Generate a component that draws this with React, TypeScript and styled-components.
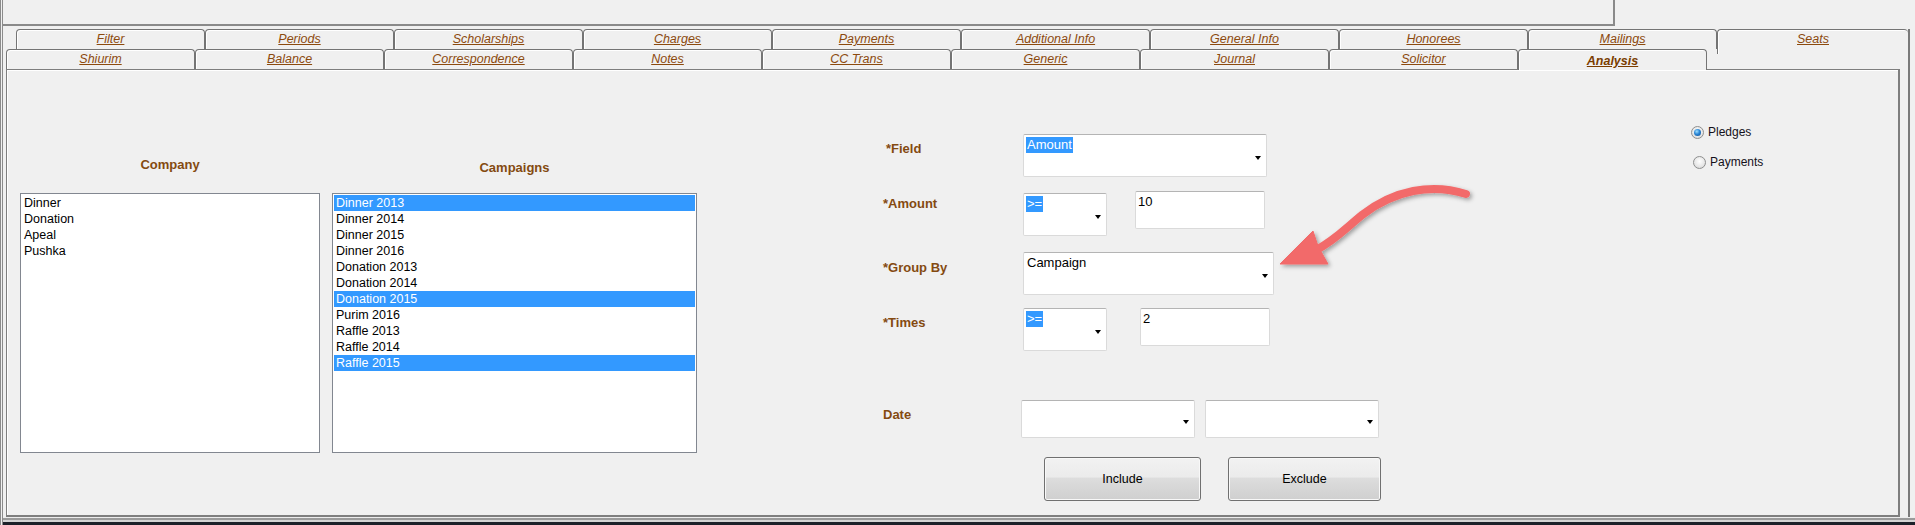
import React from 'react'
import styled, { createGlobalStyle } from 'styled-components'

const GlobalStyle = createGlobalStyle`
  html, body {
    margin: 0;
    padding: 0;
    background: #f0f0f0;
  }
  body {
    font-family: 'Liberation Sans', Arial, sans-serif;
  }
`

const Window = styled.div`
  position: relative;
  width: 1915px;
  height: 525px;
  box-sizing: border-box;
  border-left: 3px double #8b8b8b;
  background: #f0f0f0;
  display: flex;
  flex-direction: column;
  overflow: hidden;
`

const TopPanel = styled.div`
  flex: none;
  box-sizing: border-box;
  width: 1612px;
  height: 26px;
  border-right: 2px solid #8a8a8a;
  border-bottom: 2px solid #8a8a8a;
`

const TabControl = styled.div`
  flex: 1;
  min-height: 0;
  margin: 3px 5px 0 0;
  display: flex;
  flex-direction: column;
  border-right: 2px solid #7a7a7a;
`

interface TabRowProps {
  $indent: number
}
const TabRow = styled.div<TabRowProps>`
  flex: none;
  display: flex;
  height: 20px;
  padding-left: ${({ $indent }) => $indent}px;
`

interface TabProps {
  $active?: boolean
  $wide?: boolean
}
const Tab = styled.div<TabProps>`
  position: relative;
  z-index: ${({ $active }) => ($active ? 2 : 1)};
  box-sizing: border-box;
  flex: ${({ $wide }) => ($wide ? 1 : 'none')};
  width: ${({ $wide }) => ($wide ? 'auto' : '189px')};
  height: ${({ $active, $wide }) => ($active ? 21 : $wide ? 25 : 20)}px;
  padding-top: ${({ $active }) => ($active ? 2 : 0)}px;
  border: 1px solid #747474;
  border-bottom: none;
  border-right-width: ${({ $wide }) => ($wide ? 0 : 1)}px;
  border-radius: 4px 4px 0 0;
  background: #f0f0f0;
  box-shadow: inset 1px 1px 0 #ffffff;
  text-align: center;
  font-size: 12.5px;
  line-height: 18px;
  font-style: italic;
  font-weight: ${({ $active }) => ($active ? 700 : 400)};
  color: ${({ $active }) => ($active ? '#7a3d00' : '#8c4a0e')};
  text-decoration: underline;
  white-space: nowrap;
`

const ContentPanel = styled.div`
  flex: 1;
  min-height: 0;
  margin: 0 8px 0 3px;
  box-sizing: border-box;
  border: 1px solid #7e7e7e;
  border-right-width: 2px;
  border-bottom-width: 2px;
  box-shadow: inset 1px 1px 0 #ffffff;
  display: flex;
  align-items: flex-start;
`

const BottomBar = styled.div`
  flex: none;
  height: 8px;
  background: linear-gradient(
    #ececec 0px,
    #ececec 1px,
    #9a9a9a 1px,
    #9a9a9a 3px,
    #d4d4d4 3px,
    #d4d4d4 5px,
    #1c2129 5px
  );
`

const ListsArea = styled.div`
  display: flex;
  padding-left: 13px;
  gap: 12px;
`

interface ListColumnProps {
  $width: number
}
const ListColumn = styled.div<ListColumnProps>`
  width: ${({ $width }) => $width}px;
  display: flex;
  flex-direction: column;
`

interface ColumnTitleProps {
  $top: number
}
const ColumnTitle = styled.div<ColumnTitleProps>`
  box-sizing: border-box;
  height: 123px;
  padding-top: ${({ $top }) => $top}px;
  text-align: center;
  font-size: 13px;
  line-height: 16px;
  font-weight: 700;
  color: #844a10;
`

const ListBox = styled.div`
  box-sizing: border-box;
  height: 260px;
  padding: 1px;
  background: #ffffff;
  border: 1px solid #828790;
`

interface ListItemProps {
  $selected?: boolean
}
const ListItem = styled.div<ListItemProps>`
  height: 16px;
  padding-left: 2px;
  font-size: 12.5px;
  line-height: 16px;
  color: ${({ $selected }) => ($selected ? '#ffffff' : '#000000')};
  background: ${({ $selected }) => ($selected ? '#3399ff' : 'transparent')};
  white-space: nowrap;
`

const FormArea = styled.div`
  width: 500px;
  margin-left: 186px;
  padding-top: 64px;
  display: flex;
  flex-direction: column;
`

interface FormRowProps {
  $mt?: number
}
const FormRow = styled.div<FormRowProps>`
  display: flex;
  align-items: flex-start;
  margin-top: ${({ $mt }) => $mt || 0}px;
`

interface FieldLabelProps {
  $pt: number
  $pl?: number
  $w?: number
}
const FieldLabel = styled.div<FieldLabelProps>`
  box-sizing: border-box;
  flex: none;
  width: ${({ $w }) => $w || 140}px;
  padding-top: ${({ $pt }) => $pt}px;
  padding-left: ${({ $pl }) => $pl || 0}px;
  font-size: 13px;
  line-height: 16px;
  font-weight: 700;
  color: #844a10;
`

interface ControlsProps {
  $gap?: number
  $ml?: number
}
const Controls = styled.div<ControlsProps>`
  display: flex;
  align-items: flex-start;
  gap: ${({ $gap }) => $gap || 0}px;
  margin-left: ${({ $ml }) => $ml || 0}px;
`

interface BoxProps {
  $w: number
  $h: number
  $mt?: number
}
const SelectBox = styled.div<BoxProps>`
  box-sizing: border-box;
  width: ${({ $w }) => $w}px;
  height: ${({ $h }) => $h}px;
  margin-top: ${({ $mt }) => $mt || 0}px;
  padding: 2px 5px 0 2px;
  display: flex;
  align-items: center;
  background: #ffffff;
  border: 1px solid #dadada;
  border-top-color: #b4b4b4;
  border-radius: 2px;
  font-size: 13px;
  color: #000000;
`

interface SelectValueProps {
  $highlight?: boolean
}
const SelectValue = styled.span<SelectValueProps>`
  align-self: flex-start;
  line-height: 16px;
  padding: 0 1px;
  color: ${({ $highlight }) => ($highlight ? '#ffffff' : '#000000')};
  background: ${({ $highlight }) => ($highlight ? '#3399ff' : 'transparent')};
`

const Caret = styled.span`
  margin-left: auto;
  margin-top: 3px;
  width: 0;
  height: 0;
  border-left: 3.5px solid transparent;
  border-right: 3.5px solid transparent;
  border-top: 4px solid #000000;
`

const TextBox = styled.div<BoxProps>`
  box-sizing: border-box;
  width: ${({ $w }) => $w}px;
  height: ${({ $h }) => $h}px;
  margin-top: ${({ $mt }) => $mt || 0}px;
  padding: 2px 2px;
  background: #ffffff;
  border: 1px solid #dadada;
  border-top-color: #b4b4b4;
  border-radius: 2px;
  font-size: 13px;
  line-height: 16px;
  color: #000000;
`

interface ButtonProps {
  $w: number
}
const Button = styled.button<ButtonProps>`
  box-sizing: border-box;
  width: ${({ $w }) => $w}px;
  height: 44px;
  padding: 0;
  border: 1px solid #707070;
  border-radius: 3px;
  background: linear-gradient(
    #f2f2f2 0%,
    #ebebeb 46%,
    #dddddd 47%,
    #cfcfcf 100%
  );
  box-shadow: inset 0 0 0 1px #f8f8f8;
  font-family: 'Liberation Sans', Arial, sans-serif;
  font-size: 12.5px;
  color: #000000;
`

const RadioGroup = styled.div`
  margin-left: 308px;
  padding-top: 54px;
  display: flex;
  flex-direction: column;
  gap: 14px;
`

interface RadioRowProps {
  $ml?: number
}
const RadioRow = styled.div<RadioRowProps>`
  display: flex;
  align-items: center;
  gap: 4px;
  height: 16px;
  margin-left: ${({ $ml }) => $ml || 0}px;
  font-size: 12px;
  color: #14101a;
`

const RadioCircle = styled.span`
  box-sizing: border-box;
  width: 13px;
  height: 13px;
  border-radius: 50%;
  border: 1px solid #8e8f8f;
  background: radial-gradient(circle at 50% 40%, #ffffff 0%, #e6e6e6 60%, #cfcfcf 100%);
  display: flex;
  align-items: center;
  justify-content: center;
`

const RadioDot = styled.span`
  width: 7px;
  height: 7px;
  border-radius: 50%;
  background: radial-gradient(circle at 40% 35%, #9fe0ff 0%, #2a86d6 45%, #0b4a8c 100%);
`

const Annotation = styled.svg`
  position: absolute;
  left: 0;
  top: 0;
  pointer-events: none;
`

const row1 = [
  'Filter',
  'Periods',
  'Scholarships',
  'Charges',
  'Payments',
  'Additional Info',
  'General Info',
  'Honorees',
  'Mailings',
]

const row2 = [
  'Shiurim',
  'Balance',
  'Correspondence',
  'Notes',
  'CC Trans',
  'Generic',
  'Journal',
  'Solicitor',
  'Analysis',
]

const companies = ['Dinner', 'Donation', 'Apeal', 'Pushka']

const campaigns = [
  { name: 'Dinner 2013', selected: true },
  { name: 'Dinner 2014' },
  { name: 'Dinner 2015' },
  { name: 'Dinner 2016' },
  { name: 'Donation 2013' },
  { name: 'Donation 2014' },
  { name: 'Donation 2015', selected: true },
  { name: 'Purim 2016' },
  { name: 'Raffle 2013' },
  { name: 'Raffle 2014' },
  { name: 'Raffle 2015', selected: true },
]

export default function App() {
  return (
    <>
      <GlobalStyle />
      <Window>
        <TopPanel />
        <TabControl>
          <TabRow $indent={13}>
            {row1.map(t => (
              <Tab key={t}>{t}</Tab>
            ))}
            <Tab $wide>Seats</Tab>
          </TabRow>
          <TabRow $indent={3}>
            {row2.map(t => (
              <Tab key={t} $active={t === 'Analysis'}>
                {t}
              </Tab>
            ))}
          </TabRow>
          <ContentPanel>
            <ListsArea>
              <ListColumn $width={300}>
                <ColumnTitle $top={87}>Company</ColumnTitle>
                <ListBox>
                  {companies.map(c => (
                    <ListItem key={c}>{c}</ListItem>
                  ))}
                </ListBox>
              </ListColumn>
              <ListColumn $width={365}>
                <ColumnTitle $top={90}>Campaigns</ColumnTitle>
                <ListBox>
                  {campaigns.map(c => (
                    <ListItem key={c.name} $selected={c.selected}>
                      {c.name}
                    </ListItem>
                  ))}
                </ListBox>
              </ListColumn>
            </ListsArea>

            <FormArea>
              <FormRow>
                <FieldLabel $pt={7} $pl={3}>
                  *Field
                </FieldLabel>
                <SelectBox $w={244} $h={43}>
                  <SelectValue $highlight>Amount</SelectValue>
                  <Caret />
                </SelectBox>
              </FormRow>

              <FormRow $mt={14}>
                <FieldLabel $pt={5}>*Amount</FieldLabel>
                <Controls $gap={28}>
                  <SelectBox $w={84} $h={43} $mt={2}>
                    <SelectValue $highlight>&gt;=</SelectValue>
                    <Caret />
                  </SelectBox>
                  <TextBox $w={130} $h={38}>
                    10
                  </TextBox>
                </Controls>
              </FormRow>

              <FormRow $mt={16}>
                <FieldLabel $pt={8}>*Group By</FieldLabel>
                <SelectBox $w={251} $h={43}>
                  <SelectValue>Campaign</SelectValue>
                  <Caret />
                </SelectBox>
              </FormRow>

              <FormRow $mt={13}>
                <FieldLabel $pt={7}>*Times</FieldLabel>
                <Controls $gap={33}>
                  <SelectBox $w={84} $h={43}>
                    <SelectValue $highlight>&gt;=</SelectValue>
                    <Caret />
                  </SelectBox>
                  <TextBox $w={130} $h={38}>
                    2
                  </TextBox>
                </Controls>
              </FormRow>

              <FormRow $mt={49}>
                <FieldLabel $pt={7} $w={138}>
                  Date
                </FieldLabel>
                <Controls $gap={10}>
                  <SelectBox $w={174} $h={38}>
                    <Caret />
                  </SelectBox>
                  <SelectBox $w={174} $h={38}>
                    <Caret />
                  </SelectBox>
                </Controls>
              </FormRow>

              <FormRow $mt={19}>
                <Controls $gap={27} $ml={161}>
                  <Button $w={157}>Include</Button>
                  <Button $w={153}>Exclude</Button>
                </Controls>
              </FormRow>
            </FormArea>

            <RadioGroup>
              <RadioRow>
                <RadioCircle>
                  <RadioDot />
                </RadioCircle>
                Pledges
              </RadioRow>
              <RadioRow $ml={2}>
                <RadioCircle />
                Payments
              </RadioRow>
            </RadioGroup>
          </ContentPanel>
        </TabControl>
        <BottomBar />

        <Annotation width={1912} height={525} viewBox='3 0 1912 525'>
          <defs>
            <filter id='arrowShadow' x='-20%' y='-20%' width='140%' height='140%'>
              <feDropShadow dx='2' dy='2' stdDeviation='2' floodColor='#000' floodOpacity='0.35' />
            </filter>
          </defs>
          <g filter='url(#arrowShadow)' fill='#f26b6b' stroke='#f26b6b'>
            <path
              d='M1466 194 C1432 183, 1394 190, 1362 215 C1346 228, 1334 241, 1316 250'
              fill='none'
              strokeWidth={8}
              strokeLinecap='round'
            />
            <path
              d='M1280 264 L1313 231 L1318 246 L1328 264 Z'
              strokeWidth={1}
              strokeLinejoin='round'
            />
          </g>
        </Annotation>
      </Window>
    </>
  )
}
